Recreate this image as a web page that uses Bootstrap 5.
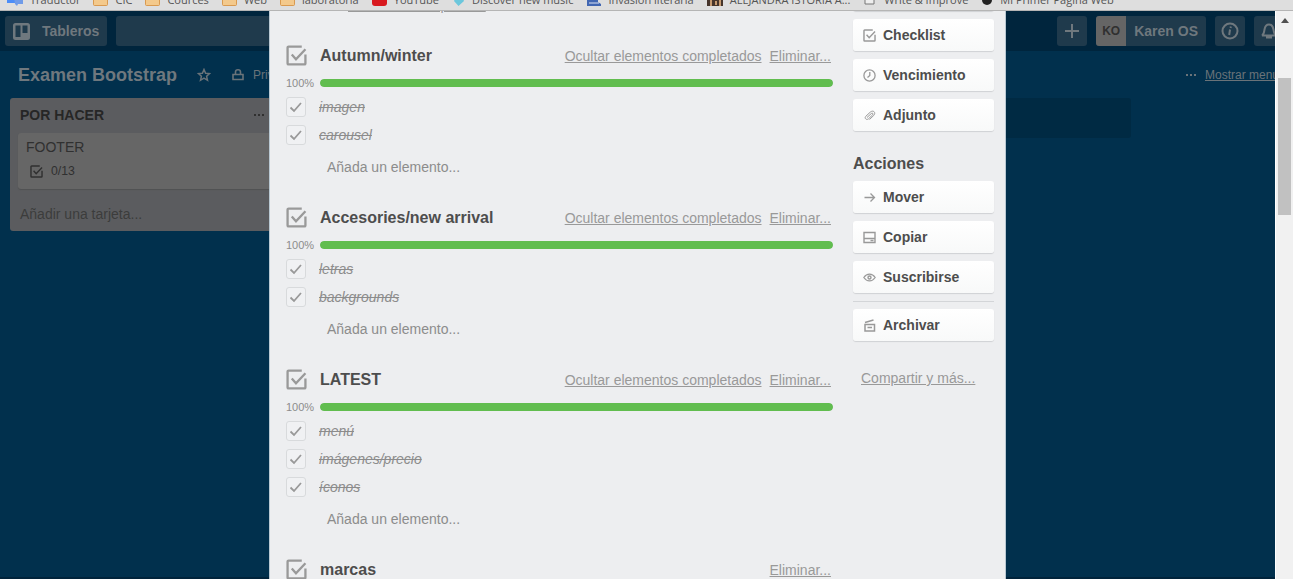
<!DOCTYPE html>
<html lang="es">
<head>
<meta charset="utf-8">
<meta name="viewport" content="width=device-width, initial-scale=1">
<title>Examen Bootstrap</title>
<link rel="stylesheet" href="https://cdn.jsdelivr.net/npm/bootstrap@5.3.0/dist/css/bootstrap.min.css">
<style>
body{font-family:"Liberation Sans",Arial,sans-serif;font-size:14px;line-height:20px;color:#4d4d4d;background:#01304d}
svg{display:block;flex:none;fill:none;stroke:currentColor}
button{font:inherit;color:inherit;border:0}
.bookmarks{height:11px;background:#dedede;border-bottom:1px solid #b5b5b5;gap:13px;padding:0 7px 2px;font:11px/16px "Open Sans",sans-serif}
.bookmarks a{gap:7px;color:#555;height:16px}
.bookmarks svg{stroke:none;margin-bottom:2px}
.stage{min-height:0}
.board{color:#6a7379;border-bottom:2px solid #00233b}
.topbar{height:40px;background:#00253d;padding:0 9px 0 5px;gap:9px}
.top-btn{height:30px;min-width:30px;background:#1f3a4c;border-radius:3px;font-weight:700;font-size:14px;color:#6f787e}
.search-box{height:30px;width:190px;background:#1f3a4c;border:0;border-radius:3px}
.avatar{width:30px;height:30px;background:#656565;color:#303030;font-size:12px;border-radius:3px 0 0 3px}
.board-head{height:47px;padding:0 14px 0 18px}
.board-head h1{font-size:18px;line-height:24px;font-weight:700;color:#6f787e}
.board-head,.board-head a{font-size:12px;color:#6a7379}
.lists{gap:11px;padding:0 10px}
.list-col{width:272px;flex:none}
.list-box{background:#5b5c5f;border-radius:3px;color:#303030;padding:7px 8px 7px;height:133px}
.list-box h2{font-size:14px;line-height:20px;font-weight:700;color:#262626}
.list-pad{padding:0 9px 0 2px}
.task{background:#666;border-radius:3px;height:56px;padding:4px 8px;box-shadow:0 1px 1px #505153;color:#303030}
.add-list{height:40px;background:#002a43;border-radius:3px}
.list-box .muted-link{color:#3c3c3c}
.overlay-layer{inset:0 18px 0 0}
.dialog{width:737px;background:#edeef0;padding:0 11px 0 16px;gap:20px;border:solid #b9c8d2;border-width:0 1px;margin-top:-32px}
.side{width:141px;flex:none}
.desc-row{height:59px;padding:16px 0 0 62px}
.grey-link{color:#999;text-decoration:underline}
.checklist{margin-bottom:15px}
.checklist header{height:35px;gap:8px;padding-right:2px}
.checklist h3{font-size:16px;line-height:24px;font-weight:700;color:#4d4d4d;padding-left:5px}
.checklist header svg{color:#999}
.bar-row{height:20px}
.bar-row span{width:34px;font-size:11px;color:#8c8c8c}
.bar-row .progress{height:8px;border-radius:4px;background:#d6dadc}
.bar-row .progress-bar{background:#61bd4f;border-radius:4px}
.tick{height:28px;gap:13px;color:#8c8c8c;font-style:italic}
.tick input{appearance:none;width:20px;height:20px;margin:0;border:1px solid #d8dadc;border-radius:3px;background:#f0f1f3 url("data:image/svg+xml,%3Csvg xmlns='http://www.w3.org/2000/svg' viewBox='0 0 18 18'%3E%3Cpath d='M3.500 9.500 7 13l7-8' fill='none' stroke='%23999' stroke-width='1.800'/%3E%3C/svg%3E") center/18px no-repeat}
.add-item{height:36px;padding:0 0 0 41px;background:none;color:#8c8c8c}
.side-btn{height:32px;margin-bottom:8px;padding:0 10px;gap:7px;border-radius:3px;background:linear-gradient(#fff,#f8f9f9);box-shadow:0 1px 1px #cfd1d4;color:#4d4d4d;font-weight:700}
.side-btn svg{color:#999}
.side h3{font-size:16px;line-height:24px;font-weight:700;margin:21px 0 5px}
.side hr{margin:0 0 7px;color:#d3d5d8;opacity:1;border-width:1px}
.share{padding-left:8px;margin-top:27px}
.scroll-track{inset:0 0 0 auto;width:18px;background:#f1f1f1;border-left:1px solid #fff;padding:7px 2px 0}
.scroll-thumb{height:137px;background:#c1c1c1;margin-top:55px}
</style>
</head>
<body class="vh-100 d-flex flex-column overflow-hidden">
<svg class="d-none">
<symbol id="check" viewBox="0 0 20 20"><path d="M15 1.500H2.500a1 1 0 0 0-1 1v15a1 1 0 0 0 1 1h15a1 1 0 0 0 1-1V9M5.500 9l4 4.500 9-9.500" stroke-width="2.200"/></symbol>
<symbol id="folder" viewBox="0 0 15 14"><path d="M0 3q0-2 2-2h4l2 2h5q2 0 2 2v7q0 2-2 2H2q-2 0-2-2z" fill="#d99a50"/><path d="M1 5h13v8H1z" fill="#f3c98c"/></symbol>
</svg>
<nav class="bookmarks d-flex align-items-end overflow-hidden flex-shrink-0 text-nowrap">
<a href="#" class="d-flex align-items-end text-decoration-none"><svg width="16" height="14"><path d="M0 0h11v11H0z" fill="#4b8df8"/><path d="M7 5h9v7h-5l-1 2-2-2z" fill="#6f9be8"/></svg>Traductor</a>
<a href="#" class="d-flex align-items-end text-decoration-none"><svg width="15" height="14"><use href="#folder"/></svg>CIC</a>
<a href="#" class="d-flex align-items-end text-decoration-none"><svg width="15" height="14"><use href="#folder"/></svg>Cources</a>
<a href="#" class="d-flex align-items-end text-decoration-none"><svg width="15" height="14"><use href="#folder"/></svg>Web</a>
<a href="#" class="d-flex align-items-end text-decoration-none"><svg width="15" height="14"><use href="#folder"/></svg>laboratoria</a>
<a href="#" class="d-flex align-items-end text-decoration-none"><svg width="15" height="14"><rect y="2" width="15" height="12" rx="3" fill="#d8191f"/></svg>YouTube</a>
<a href="#" class="d-flex align-items-end text-decoration-none"><svg width="13" height="14"><path d="M6.500 14 2 9l2-5 3 1 3-2 2 6z" fill="#6cc7dc"/></svg>Discover new music</a>
<a href="#" class="d-flex align-items-end text-decoration-none"><svg width="15" height="14"><path d="M1 0h11v10l3 2v2H1z" fill="#4267b2"/><path d="M3 11h10" stroke="#dbe3f3"/></svg>Invasión literaria</a>
<a href="#" class="d-flex align-items-end text-decoration-none"><svg width="16" height="14"><path d="M0 0h16v14H0z" fill="#46352b"/><path d="M3 8h2v6H3zM8 9h2v4H8zM12 8h2v6h-2z" fill="#c59a70"/></svg>ALEJANDRA ISTORIA A...</a>
<a href="#" class="d-flex align-items-end text-decoration-none"><svg width="14" height="14"><path d="M2 1h9v11H2z" fill="#eee" stroke="#777"/></svg>Write &amp; Improve</a>
<a href="#" class="d-flex align-items-end text-decoration-none"><svg width="12" height="14"><circle cx="6" cy="8" r="5" fill="#222"/></svg>Mi Primer Página Web</a>
</nav>

<main class="stage position-relative flex-grow-1 overflow-hidden">
<div class="board h-100">
<div class="topbar d-flex align-items-center">
<button class="top-btn d-flex align-items-center gap-2 ps-2 pe-2"><svg width="17" height="17" class="me-1 ms-n1"><path d="M2.500 0h12A2.500 2.500 0 0 1 17 2.500v12a2.500 2.500 0 0 1-2.500 2.500h-12A2.500 2.500 0 0 1 0 14.500v-12A2.500 2.500 0 0 1 2.500 0zM2.500 2.500v11.500h5V2.500zM9.500 2.500v7.500h5V2.500z" fill="currentColor" fill-rule="evenodd" stroke="none"/></svg>Tableros</button>
<input class="search-box" type="search" aria-label="Buscar">
<button class="top-btn ms-auto p-0 d-flex align-items-center justify-content-center" aria-label="Crear"><svg width="16" height="16"><path d="M8 1v14M1 8h14" stroke-width="2"/></svg></button>
<button class="top-btn p-0 pe-2 d-flex align-items-center gap-2"><span class="avatar d-flex align-items-center justify-content-center">KO</span>Karen OS</button>
<button class="top-btn p-0 d-flex align-items-center justify-content-center" aria-label="Información"><svg width="18" height="18"><circle cx="9" cy="9" r="7.500" stroke-width="2"/><path d="M9.800 4.500 9.600 6M9 7.500 8.200 13" stroke-width="2"/></svg></button>
<button class="top-btn p-0 d-flex align-items-center justify-content-center" aria-label="Notificaciones"><svg width="18" height="18"><path d="M2 13.500c2-1 2-3 2.500-6 .500-3 2-5 4.500-5s4 2 4.500 5c.500 3 .5 5 2.500 6zM7 14v1.500h4V14" stroke-width="2"/></svg></button>
</div>
<div class="board-head d-flex align-items-center">
<h1 class="m-0 me-3 pe-1">Examen Bootstrap</h1>
<svg width="14" height="14" class="me-3"><path d="m7 1.500 1.600 3.800 4 .3-3 2.700.9 4L7 10.200l-3.500 2.100.9-4-3-2.700 4-.3z" stroke-width="1.500"/></svg>
<svg width="14" height="14" class="ms-1 me-2"><path d="M2 6.500h10v5H2zM4.500 6.500V4c0-3 5-3 5 0v2.500" stroke-width="1.600"/></svg>
<span>Privado</span>
<svg width="12" height="4" class="ms-auto me-2"><path d="M1 2h2M5 2h2M9 2h2" stroke-width="2"/></svg>
<a href="#">Mostrar menú</a>
</div>
<div class="lists d-flex align-items-start">
<section class="list-col list-box d-flex flex-column">
<div class="list-pad d-flex align-items-center justify-content-between mb-2"><h2 class="m-0">POR HACER</h2><svg width="12" height="4"><path d="M1 2h2M5 2h2M9 2h2" stroke-width="2"/></svg></div>
<div class="task"><div>FOOTER</div><div class="d-flex align-items-center gap-1 ps-1 mt-1"><svg width="13" height="13"><use href="#check"/></svg><small class="ps-1">0/13</small></div></div>
<a href="#" class="muted-link list-pad text-decoration-none mt-auto">Añadir una tarjeta...</a>
</section>
<section class="list-col"></section>
<section class="list-col"></section>
<section class="list-col add-list"></section>
</div>
</div>

<div class="overlay-layer position-absolute d-flex justify-content-center">
<div class="dialog d-flex" role="dialog" aria-label="Tarjeta">
<div class="flex-grow-1">
<div class="desc-row"><a href="#" class="grey-link">Editar la descripción...</a></div>

<section class="checklist">
<header class="d-flex align-items-center"><svg width="21" height="21"><use href="#check"/></svg><h3 class="m-0 me-auto">Autumn/winter</h3><a href="#" class="grey-link">Ocultar elementos completados</a><a href="#" class="grey-link">Eliminar...</a></header>
<div class="bar-row d-flex align-items-center"><span>100%</span><div class="progress flex-grow-1"><div class="progress-bar w-100"></div></div></div>
<label class="tick d-flex align-items-center"><input type="checkbox" checked><s>imagen</s></label>
<label class="tick d-flex align-items-center"><input type="checkbox" checked><s>carousel</s></label>
<button class="add-item d-block">Añada un elemento...</button>
</section>

<section class="checklist">
<header class="d-flex align-items-center"><svg width="21" height="21"><use href="#check"/></svg><h3 class="m-0 me-auto">Accesories/new arrival</h3><a href="#" class="grey-link">Ocultar elementos completados</a><a href="#" class="grey-link">Eliminar...</a></header>
<div class="bar-row d-flex align-items-center"><span>100%</span><div class="progress flex-grow-1"><div class="progress-bar w-100"></div></div></div>
<label class="tick d-flex align-items-center"><input type="checkbox" checked><s>letras</s></label>
<label class="tick d-flex align-items-center"><input type="checkbox" checked><s>backgrounds</s></label>
<button class="add-item d-block">Añada un elemento...</button>
</section>

<section class="checklist">
<header class="d-flex align-items-center"><svg width="21" height="21"><use href="#check"/></svg><h3 class="m-0 me-auto">LATEST</h3><a href="#" class="grey-link">Ocultar elementos completados</a><a href="#" class="grey-link">Eliminar...</a></header>
<div class="bar-row d-flex align-items-center"><span>100%</span><div class="progress flex-grow-1"><div class="progress-bar w-100"></div></div></div>
<label class="tick d-flex align-items-center"><input type="checkbox" checked><s>menú</s></label>
<label class="tick d-flex align-items-center"><input type="checkbox" checked><s>imágenes/precio</s></label>
<label class="tick d-flex align-items-center"><input type="checkbox" checked><s>íconos</s></label>
<button class="add-item d-block">Añada un elemento...</button>
</section>

<section class="checklist">
<header class="d-flex align-items-center"><svg width="21" height="21"><use href="#check"/></svg><h3 class="m-0 me-auto">marcas</h3><a href="#" class="grey-link">Eliminar...</a></header>
</section>
</div>

<aside class="side">
<button class="side-btn w-100 d-flex align-items-center" aria-label="Etiquetas"></button>
<button class="side-btn w-100 d-flex align-items-center"><svg width="13" height="13"><use href="#check"/></svg>Checklist</button>
<button class="side-btn w-100 d-flex align-items-center"><svg width="13" height="13"><circle cx="6.500" cy="6.500" r="5.600" stroke-width="1.300"/><path d="M6.800 3v3.500L4.500 8.500" stroke-width="1.300"/></svg>Vencimiento</button>
<button class="side-btn w-100 d-flex align-items-center"><svg width="13" height="13"><path d="m4 8.500 4.300-4c1.200-1 2.400.3 1.300 1.400L5.500 9.800C3.500 11.500 1 9.200 2.800 7.300l4.500-4.200c3-2.500 6 .5 3.500 3.300L6.500 10.500" stroke-width="1"/></svg>Adjunto</button>
<h3>Acciones</h3>
<button class="side-btn w-100 d-flex align-items-center"><svg width="13" height="13"><path d="M1.500 6.500h10M7.500 2.500l4 4-4 4" stroke-width="1.300"/></svg>Mover</button>
<button class="side-btn w-100 d-flex align-items-center"><svg width="13" height="13"><path d="M1 1.500h11v10H1zM1 7.500h11" stroke-width="1.400"/><path d="M7.500 9.500h3" stroke-width="1.500"/></svg>Copiar</button>
<button class="side-btn w-100 d-flex align-items-center"><svg width="13" height="13"><path d="M.8 6.500c3-4.500 8.400-4.500 11.400 0-3 4.500-8.400 4.500-11.400 0z" stroke-width="1.200"/><circle cx="6.500" cy="6.500" r="1.500" stroke-width="1.400"/></svg>Suscribirse</button>
<hr>
<button class="side-btn w-100 d-flex align-items-center"><svg width="13" height="13"><path d="M2 5.500h9.500v6.500H2zM2 3.500l8.500-2.500M4.500 8.500h4.500" stroke-width="1.500"/></svg>Archivar</button>
<div class="share"><a href="#" class="grey-link">Compartir y más...</a></div>
</aside>
</div>
</div>

<div class="scroll-track position-absolute">
<svg width="8" height="5" class="mx-auto"><path d="M0 5 4 0l4 5z" fill="#505050" stroke="none"/></svg>
<div class="scroll-thumb"></div>
</div>
</main>
<script src="https://cdn.jsdelivr.net/npm/bootstrap@5.3.0/dist/js/bootstrap.bundle.min.js"></script>
</body>
</html>
